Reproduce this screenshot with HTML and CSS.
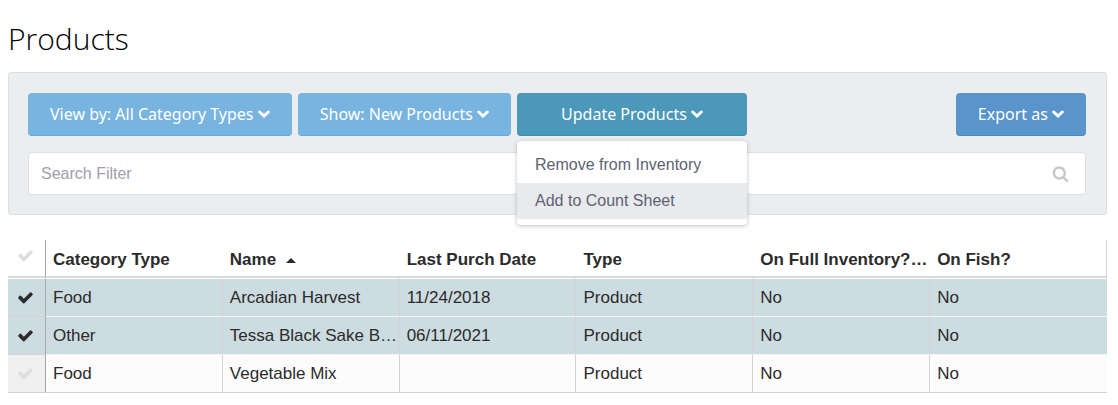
FILE: index.html
```html
<!DOCTYPE html>
<html lang="en">
<head>
    <meta charset="UTF-8">
    <meta name="viewport" content="width=device-width, initial-scale=1.0">
    <title>Products</title>
    <link rel="stylesheet" href="styles.css">
</head>
<body>

<!-- Shared icons -->
<svg class="icon-defs" aria-hidden="true">
    <symbol id="icon-chevron" viewBox="0 0 12 8">
        <path d="M1.700 2l4.300 4 4.300-4" fill="none" stroke="currentColor" stroke-width="3" stroke-linecap="round" stroke-linejoin="miter"/>
    </symbol>
    <symbol id="icon-check" viewBox="0 0 1792 1792">
        <path fill="currentColor" d="M1671 566q0 40-28 68l-724 724-136 136q-28 28-68 28t-68-28l-136-136-362-362q-28-28-28-68t28-68l136-136q28-28 68-28t68 28l294 295 656-657q28-28 68-28t68 28l136 136q28 28 28 68z"/>
    </symbol>
    <symbol id="icon-search" viewBox="0 0 1792 1792">
        <path fill="currentColor" d="M1216 832q0-185-131.500-316.500t-316.500-131.500-316.500 131.500-131.500 316.500 131.500 316.500 316.500 131.500 316.500-131.500 131.500-316.500zm512 832q0 52-38 90t-90 38q-54 0-90-38l-343-342q-179 124-399 124-143 0-273.500-55.500t-225-150-150-225-55.500-273.500 55.500-273.500 150-225 225-150 273.500-55.500 273.500 55.500 225 150 150 225 55.500 273.500q0 220-124 399l343 343q37 37 37 90z"/>
    </symbol>
</svg>

<h1>Products</h1>

<div class="panel">
    <div class="toolbar">
        <button type="button" class="btn btn-light">View by: All Category Types <svg class="chevron"><use href="#icon-chevron"/></svg></button>
        <button type="button" class="btn btn-light">Show: New Products <svg class="chevron"><use href="#icon-chevron"/></svg></button>
        <div class="dropdown">
            <button type="button" class="btn btn-teal" aria-expanded="true">Update Products <svg class="chevron"><use href="#icon-chevron"/></svg></button>
            <div class="dropdown-menu">
                <a href="#">Remove from Inventory</a>
                <a href="#" class="active">Add to Count Sheet</a>
            </div>
        </div>
        <button type="button" class="btn btn-blue">Export as <svg class="chevron"><use href="#icon-chevron"/></svg></button>
    </div>
    <div class="search">
        <input type="text" placeholder="Search Filter" aria-label="Search Filter">
        <svg class="search-icon"><use href="#icon-search"/></svg>
    </div>
</div>

<table class="grid">
    <thead>
        <tr>
            <th class="select-col"><label class="check"><input type="checkbox" aria-label="Select all"><svg><use href="#icon-check"/></svg></label></th>
            <th>Category Type</th>
            <th>Name <span class="sort-asc"></span></th>
            <th>Last Purch Date</th>
            <th>Type</th>
            <th>On Full Inventory?…</th>
            <th>On Fish?</th>
        </tr>
    </thead>
    <tbody>
        <tr class="selected">
            <td class="select-col"><label class="check"><input type="checkbox" aria-label="Select row" checked><svg><use href="#icon-check"/></svg></label></td>
            <td>Food</td>
            <td>Arcadian Harvest</td>
            <td>11/24/2018</td>
            <td>Product</td>
            <td>No</td>
            <td>No</td>
        </tr>
        <tr class="selected">
            <td class="select-col"><label class="check"><input type="checkbox" aria-label="Select row" checked><svg><use href="#icon-check"/></svg></label></td>
            <td>Other</td>
            <td>Tessa Black Sake B…</td>
            <td>06/11/2021</td>
            <td>Product</td>
            <td>No</td>
            <td>No</td>
        </tr>
        <tr>
            <td class="select-col"><label class="check"><input type="checkbox" aria-label="Select row"><svg><use href="#icon-check"/></svg></label></td>
            <td>Food</td>
            <td>Vegetable Mix</td>
            <td></td>
            <td>Product</td>
            <td>No</td>
            <td>No</td>
        </tr>
    </tbody>
</table>

</body>
</html>
```
FILE: styles.css
```css
* {
    box-sizing: border-box;
}
body {
    font-family: "Liberation Sans", Arial, sans-serif;
    font-size: 16px;
    margin: 0;
    padding: 17px 11px 12px 8px;
    background-color: #fff;
    color: #2b2b2b;
}
.icon-defs {
    display: none;
}
h1 {
    font-family: "Open Sans", sans-serif;
    font-size: 30px;
    font-weight: 300;
    line-height: 44px;
    margin: 0 0 11px;
    color: #000;
}
.panel {
    padding: 20px 20px 19px 19px;
    background-color: #ecedef;
    border: 1px solid #dcdfe5;
    border-radius: 3px;
}
.toolbar {
    display: flex;
    gap: 6px;
    margin-bottom: 16px;
}
.btn {
    height: 43px;
    padding: 0 22px;
    font-family: "Noto Sans", "Open Sans", sans-serif;
    font-size: 16px;
    color: #fff;
    border: none;
    border-radius: 4px;
    white-space: nowrap;
    cursor: pointer;
}
.btn-light {
    background-color: #78b4e0;
    border-bottom: 1px solid #69a9da;
}
.btn-teal {
    width: 100%;
    background-color: #4b98b8;
    border-bottom: 1px solid #3f8dae;
}
.btn-blue {
    margin-left: auto;
    background-color: #5994ca;
    border-bottom: 1px solid #4b88c2;
}
.chevron {
    width: 12px;
    height: 8px;
    vertical-align: 2px;
}
.dropdown {
    position: relative;
    width: 230px;
}
.dropdown-menu {
    position: absolute;
    top: 100%;
    left: 0;
    right: 0;
    z-index: 1;
    margin-top: 5px;
    padding: 6px 0;
    background-color: #fff;
    border-radius: 4px;
    box-shadow: 0 1px 4px rgba(0, 0, 0, 0.25);
}
.dropdown-menu a {
    display: block;
    padding: 0 18px;
    line-height: 36px;
    color: #5d6272;
    text-decoration: none;
}
.dropdown-menu a.active {
    background-color: #e9eaee;
}
.search {
    display: flex;
    align-items: center;
    height: 43px;
    padding: 0 16px 0 12px;
    background-color: #fff;
    border: 1px solid #dcdfe5;
    border-radius: 4px;
}
.search input {
    flex: 1;
    padding: 0;
    border: none;
    outline: none;
    font-family: inherit;
    font-size: 16px;
    color: #2b2b2b;
}
.search input::placeholder {
    color: #a0a0aa;
}
.search-icon {
    width: 17px;
    height: 17px;
    color: #c8c8c8;
}
.grid {
    width: 100%;
    margin-top: 25px;
    table-layout: fixed;
    border-collapse: separate;
    border-spacing: 0;
    font-size: 17px;
}
.grid th, .grid td {
    height: 38px;
    padding: 0 1px 0 7px;
    text-align: left;
    white-space: nowrap;
    overflow: hidden;
    text-overflow: ellipsis;
}
.grid th {
    padding-top: 3px;
    border-bottom: 2px solid #d9d9d9;
}
.grid th:last-child {
    border-right: 1px solid #d3d3d3;
}
.grid td {
    background-color: #fcfcfc;
    border-right: 1px solid #d3d3d3;
    border-bottom: 1px solid #d3d3d3;
}
/* thin white line between header and rows */
.grid tbody tr:first-child td {
    height: 39px;
    border-top: 1px solid #fff;
}
.grid td:last-child {
    border-right: none;
}
.grid .selected td {
    background-color: #cddce1;
    border-bottom-color: #eef3f5;
}
.grid .select-col {
    width: 38px;
    padding: 0;
    border-right: 1px solid #a8a8a8;
}
.grid td.select-col {
    background-color: #f0f0f0;
}
.grid .selected td.select-col {
    background-color: #cddce1;
    border-bottom-color: #d3d3d3;
}
.check {
    display: grid;
    place-items: center;
    padding-right: 2px;
    color: #dedede;
}
th .check {
    padding-bottom: 5px;
}
.check input {
    grid-area: 1 / 1;
    width: 16px;
    height: 16px;
    margin: 0;
    appearance: none;
}
.check svg {
    grid-area: 1 / 1;
    width: 17px;
    height: 17px;
    pointer-events: none;
}
.check input:checked + svg {
    color: #2b2b2b;
}
.sort-asc {
    display: inline-block;
    margin-left: 5px;
    vertical-align: 2px;
    border: 5px solid transparent;
    border-top: none;
    border-bottom-color: #2b2b2b;
}
```
